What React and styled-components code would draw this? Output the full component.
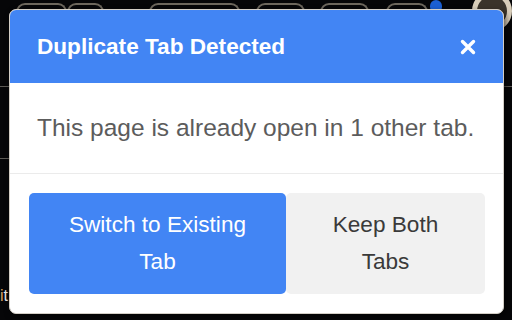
import React from 'react';
import styled, { createGlobalStyle } from 'styled-components';

const GlobalStyle = createGlobalStyle`
  html, body {
    margin: 0;
    padding: 0;
    background: #060608;
  }
  body {
    font-family: "Liberation Sans", Arial, sans-serif;
  }
`;

// Page behind the dialog
const Page = styled.div`
  position: relative;
  width: 512px;
  height: 320px;
  overflow: hidden;
  display: flex;
  flex-direction: column;
  justify-content: space-between;
  background:
    linear-gradient(#5d5a55, #5d5a55) 0 86px / 10px 1px no-repeat,
    linear-gradient(#5d5a55, #5d5a55) 0 158px / 10px 1px no-repeat,
    linear-gradient(#5d5a55, #5d5a55) 503px 86px / 10px 1px no-repeat,
    #060608;
`;

const TabStrip = styled.div`
  display: flex;
  align-items: flex-start;
  height: 12px;
  padding: 3px 0 0 16px;
`;

const TabOutline = styled.div`
  width: ${(p) => p.$w}px;
  margin-left: ${(p) => p.$gap || 0}px;
  height: 12px;
  box-sizing: border-box;
  border: 2px solid #6d675d;
  border-bottom: none;
  border-radius: 9px 9px 0 0;
`;

const Dot = styled.div`
  width: 13px;
  height: 13px;
  margin: -3px 0 0 2px;
  border-radius: 50%;
  background: #1b5fd3;
`;

const Avatar = styled.div`
  width: 40px;
  height: 40px;
  margin: -12px 0 0 30px;
  border-radius: 50%;
  box-sizing: border-box;
  border: 5px solid #d8cdb9;
  background: #3a342b;
`;

const BottomRow = styled.div`
  padding: 0 0 14px 0;
  font-size: 16px;
  line-height: 20px;
  color: #e8e8e8;

  span {
    color: #d9a060;
  }
`;

// Dialog
const Dialog = styled.div`
  position: absolute;
  top: 9px;
  left: 9px;
  width: 495px;
  box-sizing: border-box;
  border: 1px solid #d3cec6;
  border-radius: 7px;
  background: #fff;
  overflow: hidden;
  box-shadow: 2px 3px 6px rgba(0, 0, 0, 0.6);
`;

const Header = styled.div`
  height: 73px;
  display: flex;
  align-items: center;
  justify-content: space-between;
  padding: 0 24px 0 27px;
  background: #4285f4;
  color: #fff;
`;

const Title = styled.h2`
  margin: 0;
  font-size: 22.6px;
  font-weight: 700;
  letter-spacing: 0;
`;

const CloseButton = styled.button`
  border: none;
  background: transparent;
  color: #fff;
  padding: 0;
  width: 22px;
  height: 22px;
  display: flex;
  align-items: center;
  justify-content: center;
  cursor: pointer;
`;

const Body = styled.div`
  height: 90px;
  display: flex;
  align-items: center;
  padding: 0 27px;
  border-bottom: 1px solid #ebebeb;
  font-size: 24.5px;
  color: #5c5c5c;
`;

const Footer = styled.div`
  display: grid;
  grid-template-columns: 257px 199px;
  padding: 19px 18px 19px 19px;
`;

const ActionButton = styled.button`
  height: 101px;
  border: none;
  border-radius: 5px;
  font-family: "Liberation Sans", Arial, sans-serif;
  font-size: 22.6px;
  line-height: 36.7px;
  padding: 0 20px;
  cursor: pointer;
  background: ${(p) => (p.$primary ? '#4285f4' : '#f1f1f1')};
  color: ${(p) => (p.$primary ? '#ffffff' : '#3a3a3a')};
`;

const App = () => {
  return (
    <>
      <GlobalStyle />
      <Page>
        <TabStrip>
          <TabOutline $w={52} />
          <TabOutline $w={37} />
          <TabOutline $w={92} $gap={45} />
          <TabOutline $w={50} $gap={16} />
          <TabOutline $w={50} $gap={15} />
          <TabOutline $w={42} $gap={17} />
          <Dot />
          <Avatar />
        </TabStrip>
        <BottomRow>
          <span>i</span>t
        </BottomRow>

        <Dialog>
          <Header>
            <Title>Duplicate Tab Detected</Title>
            <CloseButton aria-label="Close">
              <svg width="16" height="16" viewBox="0 0 16 16">
                <path d="M2.5 2.5 L13.5 13.5 M13.5 2.5 L2.5 13.5" stroke="#fff" strokeWidth="3.4" strokeLinecap="round" />
              </svg>
            </CloseButton>
          </Header>
          <Body>This page is already open in 1 other tab.</Body>
          <Footer>
            <ActionButton $primary>Switch to Existing Tab</ActionButton>
            <ActionButton>Keep Both Tabs</ActionButton>
          </Footer>
        </Dialog>
      </Page>
    </>
  );
};

export default App;
